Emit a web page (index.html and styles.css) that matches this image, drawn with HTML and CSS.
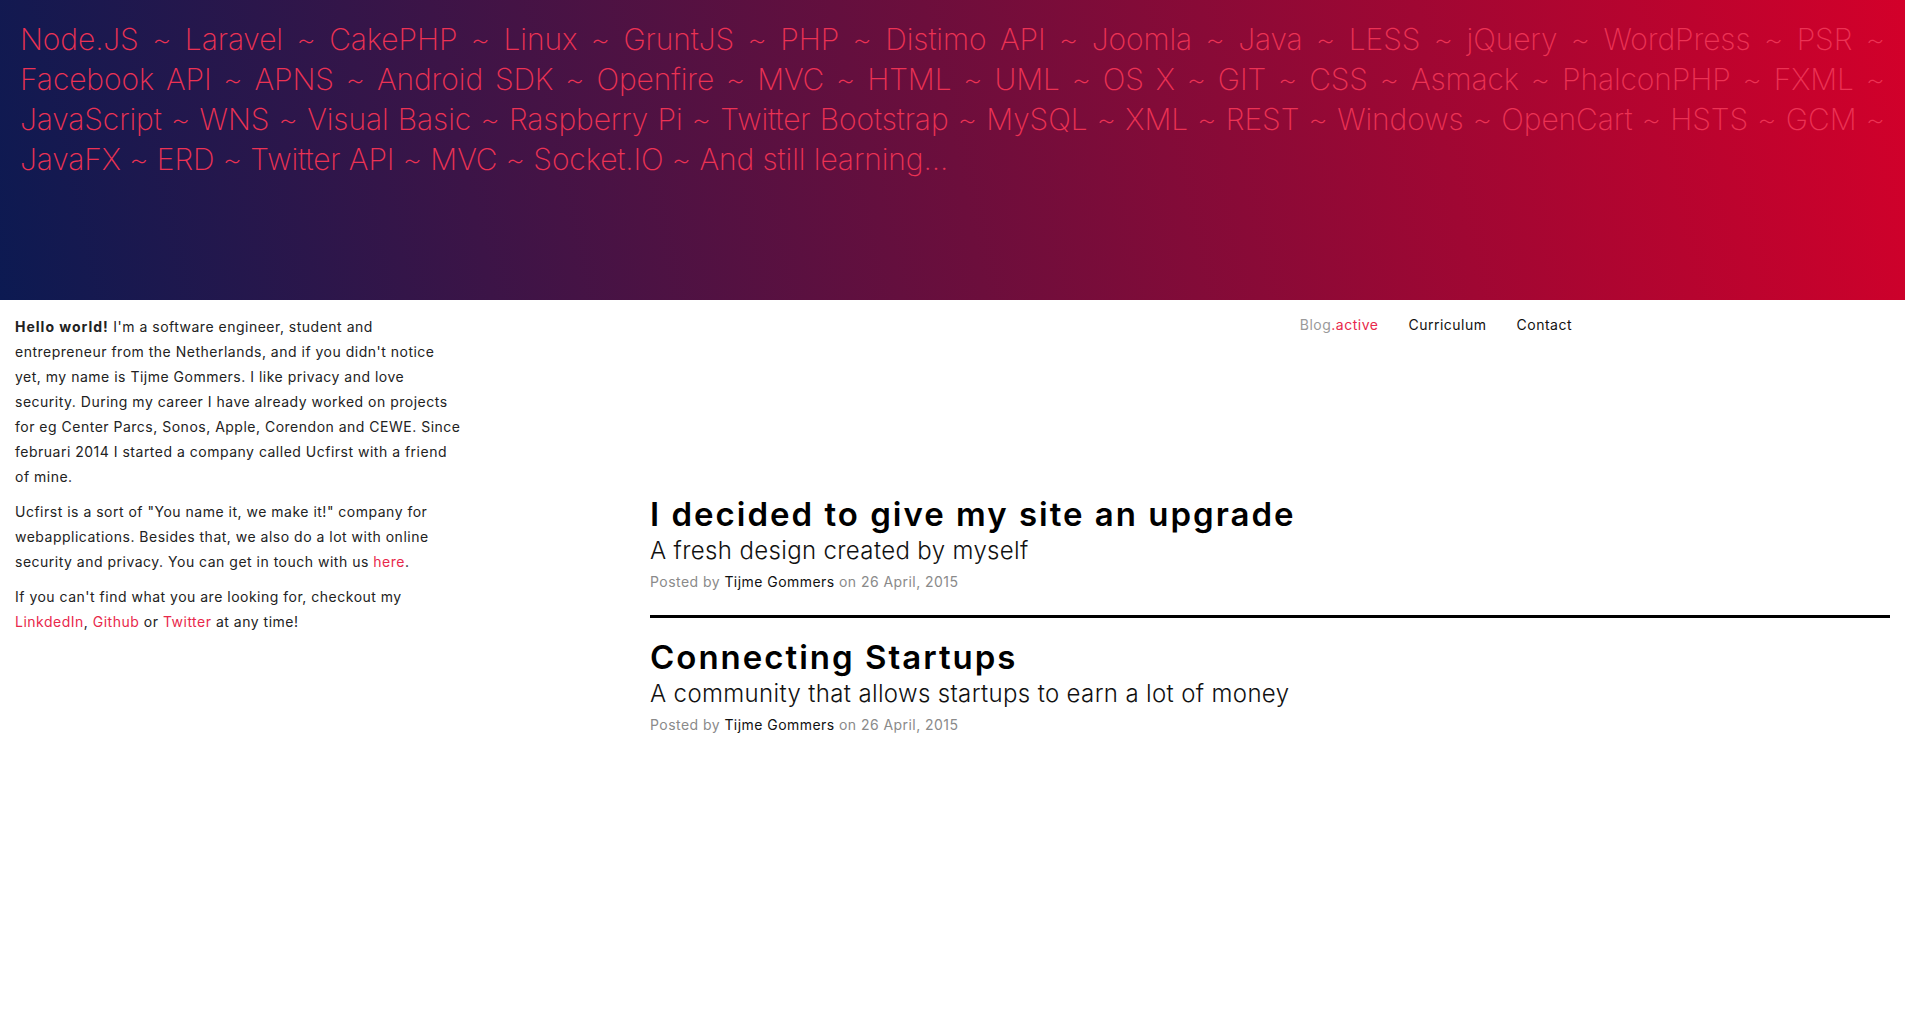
FILE: index.html
```html
<!DOCTYPE html>
<html lang="en">
<head>
<meta charset="utf-8">
<title>Tijme Gommers</title>
<link rel="stylesheet" href="styles.css">
</head>
<body>
<header class="hero">
  <p class="skills">
    <span class="skills-line">Node.JS ~ Laravel ~ CakePHP ~ Linux ~ GruntJS ~ PHP ~ Distimo API ~ Joomla ~ Java ~ LESS ~ jQuery ~ WordPress ~ PSR ~</span>
    <span class="skills-line">Facebook API ~ APNS ~ Android SDK ~ Openfire ~ MVC ~ HTML ~ UML ~ OS X ~ GIT ~ CSS ~ Asmack ~ PhalconPHP ~ FXML ~</span>
    <span class="skills-line">JavaScript ~ WNS ~ Visual Basic ~ Raspberry Pi ~ Twitter Bootstrap ~ MySQL ~ XML ~ REST ~ Windows ~ OpenCart ~ HSTS ~ GCM ~</span>
    <span class="skills-line skills-last">JavaFX ~ ERD ~ Twitter API ~ MVC ~ Socket.IO ~ And still learning...</span>
  </p>
</header>
<div class="main">
  <aside class="about">
    <p><strong>Hello world!</strong> I'm a software engineer, student and entrepreneur from the Netherlands, and if you didn't notice yet, my name is Tijme Gommers. I like privacy and love security. During my career I have already worked on projects for eg Center Parcs, Sonos, Apple, Corendon and CEWE. Since februari 2014 I started a company called Ucfirst with a friend of mine.</p>
    <p>Ucfirst is a sort of "You name it, we make it!" company for webapplications. Besides that, we also do a lot with online security and privacy. You can get in touch with us <a href="#">here</a>.</p>
    <p>If you can't find what you are looking for, checkout my <a href="#">LinkdedIn</a>, <a href="#">Github</a> or <a href="#">Twitter</a> at any time!</p>
  </aside>
  <section class="content">
    <nav class="menu">
      <a class="menu-item menu-current" href="#">Blog<span class="menu-flag">.active</span></a>
      <a class="menu-item" href="#">Curriculum</a>
      <a class="menu-item" href="#">Contact</a>
    </nav>
    <div class="posts">
      <article class="post">
        <h2 class="post-title">I decided to give my site an upgrade</h2>
        <h3 class="post-sub">A fresh design created by myself</h3>
        <p class="post-meta">Posted by <span class="post-author">Tijme Gommers</span> on 26 April, 2015</p>
      </article>
      <hr class="post-sep">
      <article class="post">
        <h2 class="post-title">Connecting Startups</h2>
        <h3 class="post-sub">A community that allows startups to earn a lot of money</h3>
        <p class="post-meta">Posted by <span class="post-author">Tijme Gommers</span> on 26 April, 2015</p>
      </article>
    </div>
  </section>
</div>
</body>
</html>
```

FILE: styles.css
```css
html, body {
  margin: 0;
  padding: 0;
}

body {
  font-family: "Inter", "Lato", "Open Sans", sans-serif;
  color: #222;
  background: #fff;
}

a {
  color: #e8284b;
  text-decoration: none;
}

.hero {
  height: 300px;
  box-sizing: border-box;
  padding: 19px 20px 0 20px;
  background: linear-gradient(78deg, #0c1a52 0%, #6c0e3c 50%, #d3002a 100%);
}

.skills {
  margin: 0;
  font-size: 30px;
  font-weight: 250;
  line-height: 40px;
  color: #ec3254;
  letter-spacing: -0.1px;
}

.skills-line {
  display: block;
  text-align: justify;
  text-align-last: justify;
}

.skills-line.skills-last {
  text-align: left;
  text-align-last: left;
}

.main {
  display: flex;
  padding-top: 14px;
}

.about {
  flex: 0 0 635px;
  box-sizing: border-box;
  padding-left: 15px;
}

.about p {
  width: 449px;
  margin: 0 0 10px 0;
  font-size: 14px;
  line-height: 25px;
  letter-spacing: 0.5px;
  color: #222;
}

.about strong {
  font-weight: 700;
  letter-spacing: 1px;
}

.content {
  flex: 1;
  padding: 0 15px;
}

.menu {
  display: flex;
  justify-content: flex-end;
  padding-right: 303px;
  line-height: 21px;
}

.menu-item {
  padding: 0 15px;
  font-size: 14px;
  color: #111;
  letter-spacing: 0.5px;
}

.menu-current {
  color: #9a9a9a;
}

.menu-flag {
  color: #e8284b;
}

.posts {
  margin-top: 161px;
}

.post-title {
  margin: 0;
  font-size: 33px;
  font-weight: 600;
  line-height: 36px;
  letter-spacing: 2px;
  color: #000;
}

.post-sub {
  margin: 2px 0 0 0;
  font-size: 24px;
  font-weight: 300;
  line-height: 34px;
  letter-spacing: 0.35px;
  color: #111;
}

.post-meta {
  margin: 1px 0 0 0;
  font-size: 14px;
  line-height: 26px;
  color: #8a8a8a;
  letter-spacing: 0.45px;
}

.post-author {
  color: #111;
}

.post-sep {
  margin: 20px 0 21px 0;
  border: 0;
  height: 3px;
  background: #000;
}
```
